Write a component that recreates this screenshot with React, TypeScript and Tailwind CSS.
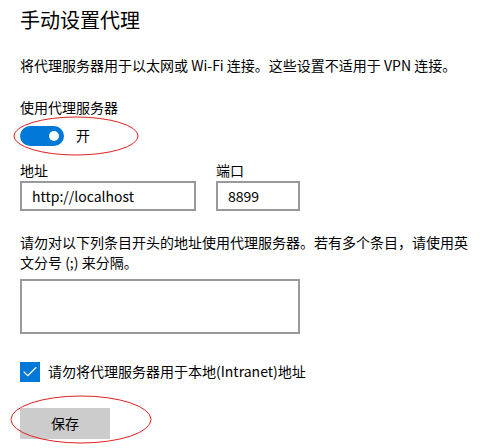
import { Check } from "lucide-react";

const font = { fontFamily: '"Segoe UI", "Noto Sans CJK SC", sans-serif' };

function Toggle() {
  return (
    <div className="flex items-center gap-3">
      <div className="w-[44px] h-[20px] rounded-full bg-[#0078d7] flex items-center justify-end pr-[5px]">
        <div className="w-[10px] h-[10px] rounded-full bg-white" />
      </div>
      <span className="text-[14px]">开</span>
    </div>
  );
}

function Field({ label, value, width }: { label: string; value: string; width: string }) {
  return (
    <div className="flex flex-col">
      <span className="text-[14px] leading-[18px]">{label}</span>
      <div className={`${width} h-[30px] mt-[2px] border-2 border-[#999999] flex items-center px-[10px] text-[14px]`}>
        {value}
      </div>
    </div>
  );
}

export default function App() {
  return (
    <div className="relative w-[491px] h-[448px] bg-white text-black overflow-hidden" style={font}>
      <div className="pl-[20px] pt-[4px]">
        <h1 className="text-[20px] leading-[32px]">手动设置代理</h1>
        <p className="text-[14px] leading-[20px] mt-[19px]">
          将代理服务器用于以太网或 Wi-Fi 连接。这些设置不适用于 VPN 连接。
        </p>
        <p className="text-[14px] leading-[20px] mt-[22px]">使用代理服务器</p>
        <div className="mt-[8px]">
          <Toggle />
        </div>
        <div className="flex gap-[20px] mt-[15px]">
          <Field label="地址" value="http://localhost" width="w-[176px]" />
          <Field label="端口" value="8899" width="w-[84px]" />
        </div>
        <p className="text-[14px] leading-[20px] mt-[21px] pr-[14px]">
          请勿对以下列条目开头的地址使用代理服务器。若有多个条目，请使用英文分号 (;) 来分隔。
        </p>
        <div className="w-[280px] h-[55px] border-2 border-[#999999] mt-[7px]" />
        <div className="flex items-center gap-[8px] mt-[27px]">
          <div className="w-[20px] h-[20px] bg-[#0078d7] flex items-center justify-center">
            <Check className="w-[18px] h-[18px] text-white" strokeWidth={1.5} />
          </div>
          <span className="text-[14px]">请勿将代理服务器用于本地(Intranet)地址</span>
        </div>
        <button className="mt-[26px] w-[90px] h-[31px] bg-[#cccccc] text-[14px]">保存</button>
      </div>

      <svg className="absolute inset-0 pointer-events-none" width="491" height="448">
        <ellipse cx="76" cy="136" rx="62" ry="19" fill="none" stroke="#e02020" strokeWidth="1" />
        <ellipse cx="81" cy="419.5" rx="70" ry="23.5" fill="none" stroke="#e02020" strokeWidth="1" />
      </svg>
    </div>
  );
}
